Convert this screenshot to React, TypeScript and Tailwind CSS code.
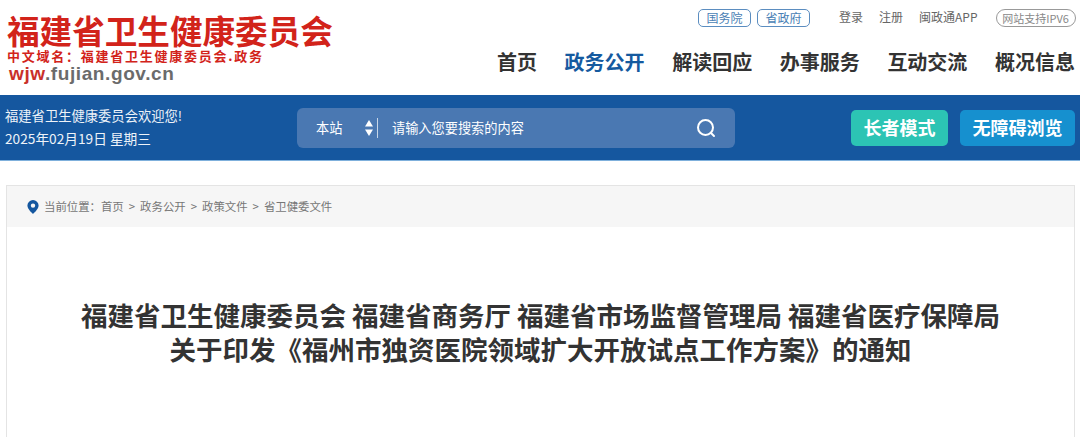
import React from 'react';

const NAV_ITEMS = ['首页', '政务公开', '解读回应', '办事服务', '互动交流', '概况信息'];
const CRUMBS = ['首页', '政务公开', '政策文件', '省卫健委文件'];

const cjk = "font-['Noto_Sans_CJK_SC','Noto_Sans',sans-serif]";

const App: React.FC = () => {
  return (
    <div className={`w-[1080px] h-[437px] overflow-hidden bg-white ${cjk}`}>
      {/* Header */}
      <div className="h-[95px] flex justify-between">
        <div className="pl-[7px] pt-[13px] w-[340px]">
          <div className="text-[32.6px] leading-[34px] font-bold text-[#d2231a] whitespace-nowrap">福建省卫生健康委员会</div>
          <div className="mt-[1px] text-[13px] leading-[16px] font-bold tracking-[1.75px] text-[#d2231a] whitespace-nowrap">中文域名：福建省卫生健康委员会.政务</div>
          <div className="ml-[2px] text-[19px] leading-[20px] font-bold tracking-[0.6px] font-['Liberation_Sans',sans-serif] text-[#6b6b6b] whitespace-nowrap">
            <span className="text-[#c9302a]">wjw</span>.fujian.gov.cn
          </div>
        </div>
        <div className="w-[590px] pr-[5px]">
          <div className="h-[40px] pt-[9px] flex items-start text-[12px] text-[#666] whitespace-nowrap">
            <div className="shrink-0 ml-[208px] w-[53px] h-[18px] flex items-center justify-center rounded-[5px] border border-[#5b8dc0] text-[#4a7fb5]">国务院</div>
            <div className="shrink-0 ml-[6px] w-[53px] h-[18px] flex items-center justify-center rounded-[5px] border border-[#5b8dc0] text-[#4a7fb5]">省政府</div>
            <span className="ml-[29px] leading-[16px]">登录</span>
            <span className="ml-[16px] leading-[16px]">注册</span>
            <span className="ml-[16px] leading-[16px]">闽政通APP</span>
            <div className="shrink-0 ml-[18px] w-[80px] h-[18px] flex items-center justify-center rounded-full border border-[#999] text-[#888] text-[11px]">网站支持IPV6</div>
          </div>
          <div className="flex justify-between text-[20px] leading-[28px] font-bold text-[#333] pl-[7px] mt-[8px] whitespace-nowrap">
            {NAV_ITEMS.map((item) => (
              <span key={item} className={item === '政务公开' ? 'text-[#155a9f]' : ''}>{item}</span>
            ))}
          </div>
        </div>
      </div>

      {/* Blue search bar */}
      <div className="h-[66px] bg-[#15579f] border-b border-[#7fb0dc] flex items-center text-white">
        <div className="w-[297px] pl-[5px] pb-[2px] leading-[23px] text-[#eef3f9] whitespace-nowrap">
          <div className="text-[13.3px]">福建省卫生健康委员会欢迎您!</div>
          <div className="text-[13.7px]">2025年02月19日 星期三</div>
        </div>
        <div className="w-[438px] h-[40px] rounded-[6px] bg-[#4a78b2] flex items-center text-[13.2px]">
          <span className="ml-[19px] w-[48px]">本站</span>
          <svg width="10" height="18" viewBox="0 0 10 18" className="fill-white">
            <path d="M5 1 L9 7.5 H1 Z" />
            <path d="M5 17 L9 10.5 H1 Z" />
          </svg>
          <div className="ml-[3px] w-px h-[20px] bg-[#c6d6e8]" />
          <span className="ml-[14px]">请输入您要搜索的内容</span>
          <svg width="22" height="22" viewBox="0 0 22 22" fill="none" stroke="white" strokeWidth="2" strokeLinecap="round" className="ml-auto mr-[18px]">
            <circle cx="10.5" cy="10.5" r="7.5" />
            <path d="M16 16 L19 19" />
          </svg>
        </div>
        <div className="ml-[116px] w-[97px] h-[36px] pb-[1px] rounded-[5px] bg-[#2cc4b4] flex items-center justify-center text-[18px] font-bold">长者模式</div>
        <div className="ml-[12px] w-[115px] h-[36px] pb-[1px] rounded-[5px] bg-[#1690cf] flex items-center justify-center text-[18px] font-bold whitespace-nowrap">无障碍浏览</div>
      </div>

      {/* Article card */}
      <div className="mt-[24px] mx-[6px] w-[1069px] h-[300px] border border-[#e4e4e4]">
        <div className="h-[41px] bg-[#f6f6f6] pl-[20px] flex items-center text-[11.4px] text-[#777] whitespace-nowrap">
          <svg width="12" height="14" viewBox="0 0 12 14" className="mr-[5px]">
            <path fillRule="evenodd" fill="#15579f" d="M6 0a5.6 5.6 0 0 0-5.6 5.6C.4 9.4 6 14 6 14s5.6-4.6 5.6-8.4A5.6 5.6 0 0 0 6 0Zm0 3.4a2.2 2.2 0 1 1 0 4.4 2.2 2.2 0 0 1 0-4.4Z" />
          </svg>
          <span>当前位置：</span>
          {CRUMBS.map((crumb, i) => (
            <span key={crumb}>
              {i > 0 && <span className="mx-[5px]">&gt;</span>}
              {crumb}
            </span>
          ))}
        </div>
        <div className="pt-[71px] text-center text-[26.5px] leading-[34px] font-bold text-[#333] whitespace-nowrap">
          <div>福建省卫生健康委员会 福建省商务厅 福建省市场监督管理局 福建省医疗保障局</div>
          <div>关于印发《福州市独资医院领域扩大开放试点工作方案》的通知</div>
        </div>
      </div>
    </div>
  );
};

export default App;
